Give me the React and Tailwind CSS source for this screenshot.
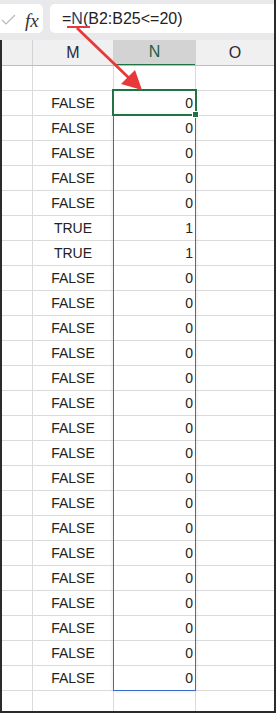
export default function App() {
  const vals = [0, 0, 0, 0, 0, 1, 1, 0, 0, 0, 0, 0, 0, 0, 0, 0, 0, 0, 0, 0, 0, 0, 0, 0];
  const grid = "border-[#dadada]";
  return (
    <div className="relative w-[276px] h-[713px] overflow-hidden bg-white border-r-2 border-b-2 border-[#2b2b2b] font-['Liberation_Sans',Arial,sans-serif] text-[#222]">
      {/* formula bar */}
      <div className="h-[40px] bg-[#e9e9eb] flex pt-[4px] pb-[7px]">
        <div className="w-[43px] h-[29px] bg-white rounded-r-[5px] flex items-center relative shrink-0">
          <svg width="16" height="12" viewBox="0 0 16 12" className="absolute left-[1px] top-[10px]">
            <path d="M1 6 L5 10 L14 1" fill="none" stroke="#b9b9b9" strokeWidth="1.2" />
          </svg>
          <span className="absolute left-[25px] top-[3px] font-['Liberation_Serif',serif] italic text-[19px] text-[#333]">fx</span>
        </div>
        <div className="ml-[7px] flex-1 h-[29px] bg-white rounded-l-[5px] flex items-center pl-[12px] text-[16px] text-[#222]">
          <span className="relative">
            =<span className="text-[#1f3f73]">N</span>(B2:B25&lt;=20)
          </span>
        </div>
      </div>

      <div className="border-l-2 border-[#2b2b2b] h-[671px] flex flex-col">
        {/* header */}
        <div className="h-[26px] flex border-b border-[#bdbdbd] bg-[#f0f0f0] text-[16px] shrink-0">
          <div className="w-[31px] border-r border-[#d2d2d2]" />
          <div className="w-[81px] border-r border-[#d2d2d2] flex items-center justify-center text-[#2a2a3a]">M</div>
          <div className="w-[82px] border-r border-[#d2d2d2] bg-[#d3d3d3] flex flex-col">
            <div className="flex-1 flex items-center justify-center text-[#1d5f43]">N</div>
            <div className="h-[2px] bg-[#217346]" />
          </div>
          <div className="flex-1 flex items-center justify-center text-[#2a2a3a]">O</div>
        </div>
        {/* empty first row */}
        <div className={`h-[25px] flex border-b ${grid} shrink-0`}>
          <div className={`w-[31px] border-r ${grid}`} />
          <div className={`w-[81px] border-r ${grid}`} />
          <div className={`w-[82px] border-r ${grid}`} />
          <div className="flex-1" />
        </div>
        {vals.map((v, i) => (
          <div key={i} className={`h-[25px] flex border-b ${grid} text-[14px] shrink-0`}>
            <div className={`w-[31px] border-r ${grid}`} />
            <div className={`w-[81px] border-r ${grid} flex items-center justify-center`}>
              {v ? "TRUE" : "FALSE"}
            </div>
            <div className={`w-[82px] border-r ${grid} flex items-center justify-end pr-[2px]`}>{v}</div>
            <div className="flex-1" />
          </div>
        ))}
        <div className="flex-1 flex">
          <div className={`w-[31px] border-r ${grid}`} />
          <div className={`w-[81px] border-r ${grid}`} />
          <div className={`w-[82px] border-r ${grid}`} />
          <div className="flex-1" />
        </div>
      </div>

      {/* selection overlays */}
      <div className="absolute left-[113px] top-[115px] w-[83px] h-[576px] border border-[#3b6cc5] shadow-[0_0_4px_rgba(0,0,0,0.12)] pointer-events-none" />
      <div className="absolute left-[112px] top-[89px] w-[85px] h-[27px] border-2 border-[#217346] pointer-events-none" />
      <div className="absolute left-[192px] top-[111px] w-[7px] h-[7px] bg-[#217346] border border-white pointer-events-none" />

      {/* red annotations */}
      <svg className="absolute left-0 top-0 pointer-events-none" width="276" height="713">
        <rect x="67" y="26" width="23" height="2" fill="#e8383a" />
        <line x1="77" y1="28" x2="130" y2="79" stroke="#e8383a" strokeWidth="2.8" />
        <polygon points="142,90 121,84 135,70" fill="#e8383a" />
      </svg>
    </div>
  );
}
